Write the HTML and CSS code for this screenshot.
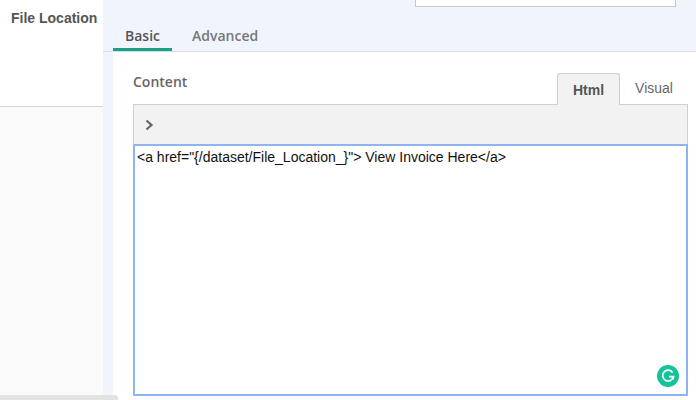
FILE: index.html
```html
<!DOCTYPE html>
<html lang="en">
<head>
<meta charset="utf-8">
<title>Content editor</title>
<link rel="stylesheet" href="styles.css">
</head>
<body>
<div class="page">
  <aside class="side">
    <div class="side-top"><span class="side-label">File Location</span></div>
    <div class="side-rest"></div>
  </aside>
  <main class="main">
    <div class="head">
      <div class="top-input"></div>
      <nav class="tabs">
        <span class="tab active">Basic</span>
        <span class="tab">Advanced</span>
      </nav>
    </div>
    <section class="body">
      <div class="field-head">
        <span class="field-label">Content</span>
        <div class="modes">
          <span class="mode on">Html</span>
          <span class="mode">Visual</span>
        </div>
      </div>
      <div class="toolbar">
        <svg class="chev" width="10" height="12" viewBox="0 0 10 12"><path d="M2.5 1.5 7.5 6 2.5 10.5" fill="none" stroke="#666" stroke-width="2.2"/></svg>
      </div>
      <div class="editor">
        <p class="code">&lt;a href="{/dataset/File_Location_}"&gt; View Invoice Here&lt;/a&gt;</p>
        <svg class="grammarly" width="22" height="22" viewBox="0 0 22 22">
          <circle cx="11" cy="11" r="11" fill="#15c39a"/>
          <path d="M15.6 7.6A5.4 5.4 0 1 0 16.4 11.6H12" fill="none" stroke="#fff" stroke-width="1.7"/>
          <path d="M16.4 11v3.4" fill="none" stroke="#fff" stroke-width="1.5"/>
        </svg>
      </div>
    </section>
  </main>
  <div class="hscroll"></div>
</div>
</body>
</html>
```
FILE: styles.css
```css
html, body {
  margin: 0;
  padding: 0;
  height: 100%;
  overflow: hidden;
}
.page {
  position: relative;
  display: flex;
  width: 696px;
  height: 400px;
  overflow: hidden;
  background: #f0f5fd;
}
.side {
  width: 103px;
  flex: none;
  display: flex;
  flex-direction: column;
}
.side-top {
  height: 107px;
  flex: none;
  background: #fff;
  border-bottom: 1px solid #d4d4d4;
  padding: 9px 0 0 11px;
  box-sizing: border-box;
}
.side-label {
  font: 700 14px/16px "Liberation Sans", Arial, sans-serif;
  color: #555;
  white-space: nowrap;
}
.side-rest {
  flex: 1;
  background: #fafafa;
}
.main {
  flex: 1;
  display: flex;
  flex-direction: column;
  min-width: 0;
}
.head {
  height: 52px;
  flex: none;
  box-sizing: border-box;
  display: flex;
  flex-direction: column;
  border-bottom: 1px solid #dcdcdc;
  padding-left: 10px;
}
.top-input {
  align-self: flex-start;
  width: 261px;
  height: 8px;
  margin-left: 302px;
  margin-top: -1px;
  box-sizing: border-box;
  background: #fff;
  border: 1px solid #c8c8c8;
}
.tabs {
  display: flex;
  margin-top: 17px;
  height: 26px;
}
.tab {
  box-sizing: border-box;
  height: 27px;
  padding: 3px 12px 0;
  margin-right: 8px;
  font: 600 14px/18px "Open Sans", sans-serif;
  color: #777;
}
.tab.active {
  color: #555;
  border-bottom: 3px solid #16a085;
}
.body {
  flex: 1;
  margin-left: 10px;
  background: #fff;
  padding: 21px 8px 4px 20px;
  display: flex;
  flex-direction: column;
  min-height: 0;
}
.field-head {
  display: flex;
  justify-content: space-between;
  align-items: flex-start;
  height: 31px;
  flex: none;
}
.field-label {
  font: 600 14px/18px "Open Sans", sans-serif;
  color: #666;
}
.modes {
  display: flex;
}
.mode {
  box-sizing: border-box;
  height: 32px;
  width: 68px;
  text-align: center;
  padding-top: 7px;
  font: 400 14px/16px "Liberation Sans", Arial, sans-serif;
  color: #666;
  position: relative;
  z-index: 1;
}
.mode.on {
  width: 63px;
  font-weight: 700;
  color: #555;
  background: #f2f2f2;
  border: 1px solid #cfcfcf;
  border-bottom: 0;
  border-radius: 3px 3px 0 0;
  padding-top: 8px;
}
.toolbar {
  height: 40px;
  flex: none;
  box-sizing: border-box;
  background: #f2f2f2;
  border: 1px solid #cfcfcf;
  border-bottom: 0;
  display: flex;
  align-items: center;
  padding-left: 10px;
}
.chev {
  display: block;
}
.editor {
  flex: 1;
  position: relative;
  box-sizing: border-box;
  background: #fff;
  border: 2px solid #8fb4f0;
  padding: 3px 2px;
}
.code {
  margin: 0;
  font: 400 14px/16px "Liberation Sans", Arial, sans-serif;
  color: #111;
  white-space: pre;
}
.grammarly {
  position: absolute;
  right: 7px;
  bottom: 7px;
}
.hscroll {
  position: absolute;
  left: 0;
  bottom: 0;
  width: 118px;
  height: 5px;
  background: #e2e2e2;
  border-radius: 0 3px 0 0;
}
```
